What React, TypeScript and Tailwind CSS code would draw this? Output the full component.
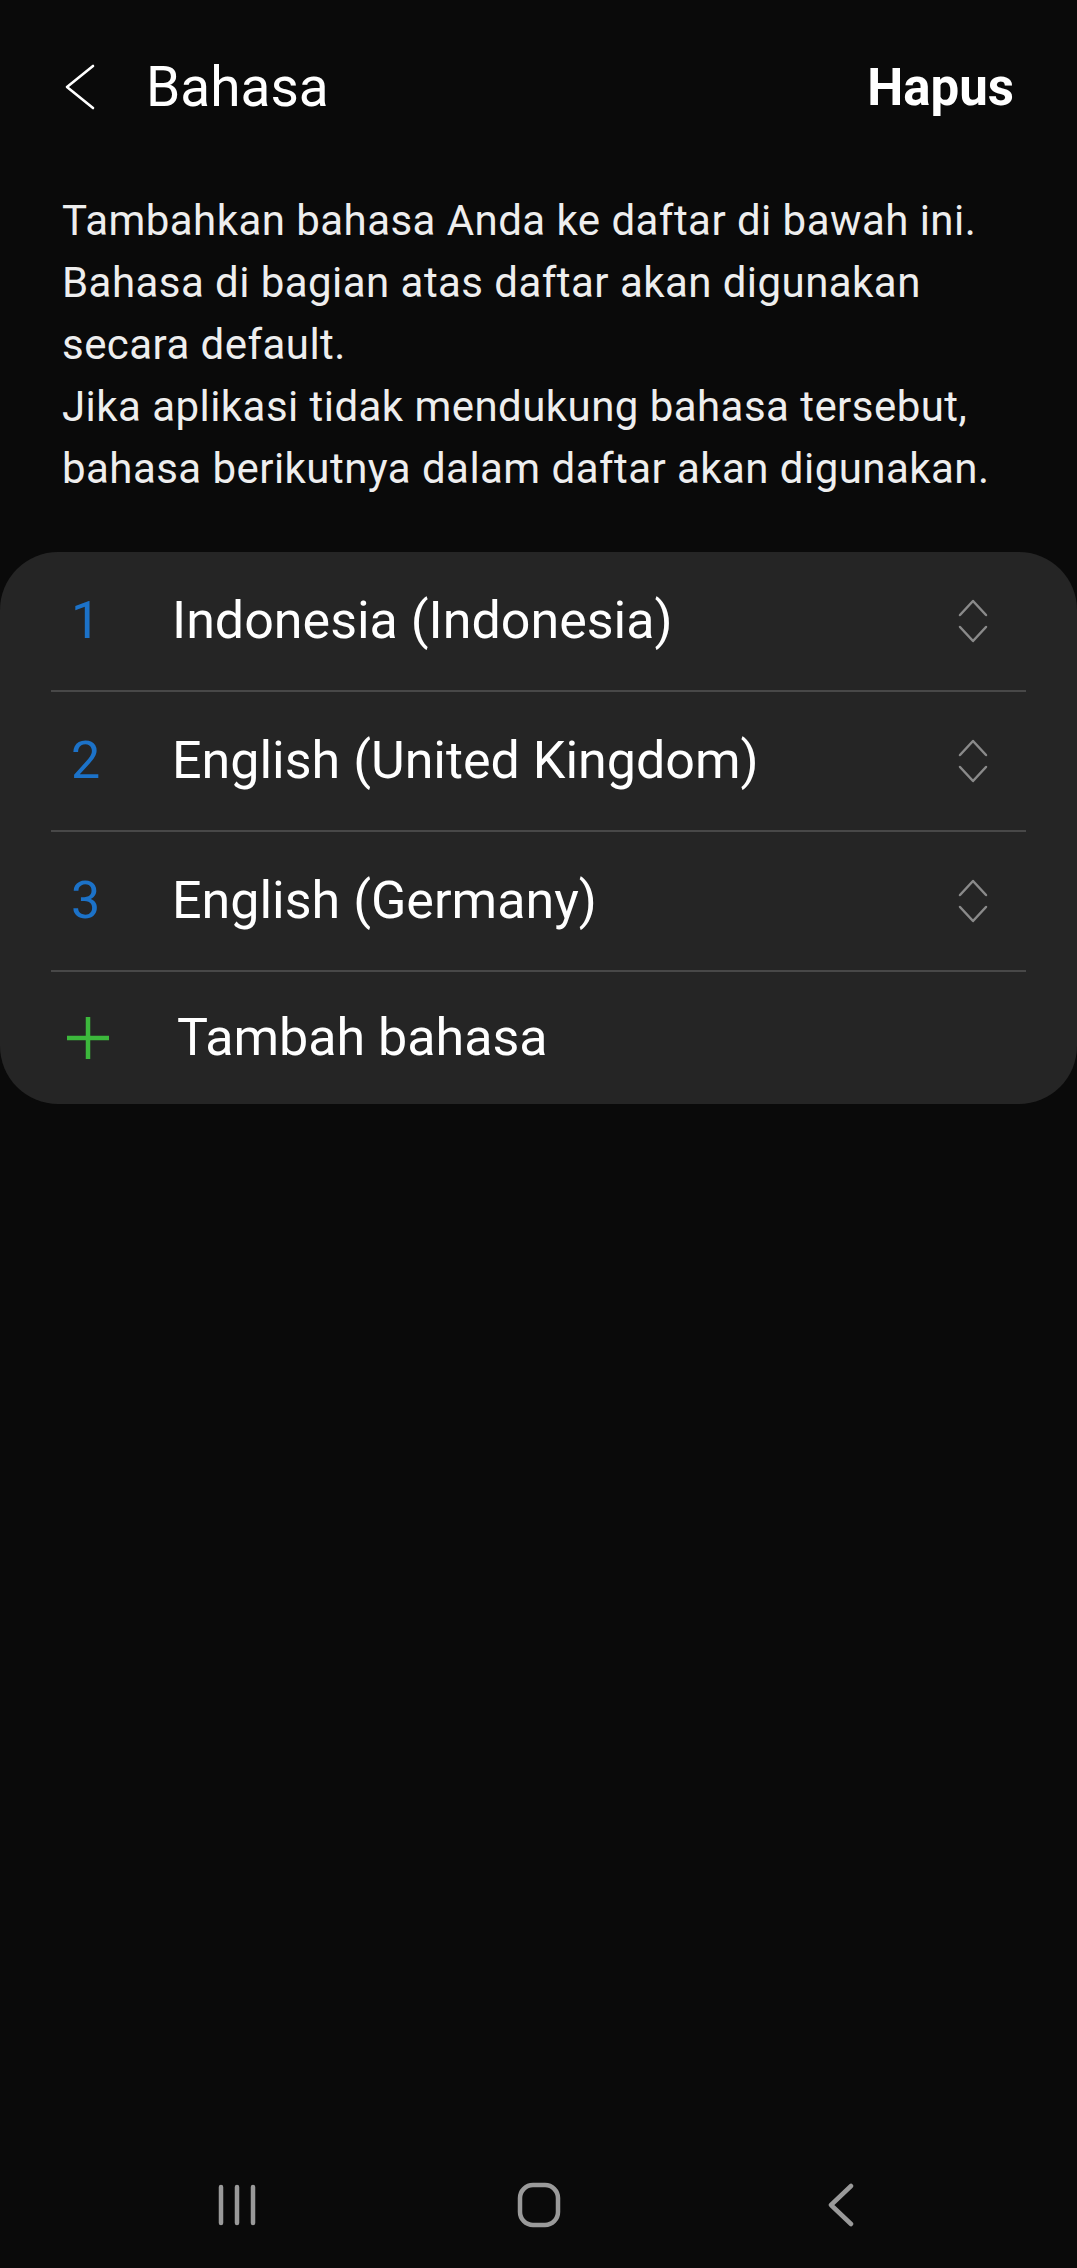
import React from "react";

const languages = [
  { no: 1, name: "Indonesia (Indonesia)" },
  { no: 2, name: "English (United Kingdom)" },
  { no: 3, name: "English (Germany)" },
];

const intro = [
  "Tambahkan bahasa Anda ke daftar di bawah ini.",
  "Bahasa di bagian atas daftar akan digunakan",
  "secara default.",
  "Jika aplikasi tidak mendukung bahasa tersebut,",
  "bahasa berikutnya dalam daftar akan digunakan.",
];

// up/down reorder handle
const ReorderHandle = () => (
  <svg width="30" height="46" viewBox="0 0 30 46" fill="none">
    <path d="M2 17 L15 3 L28 17" stroke="#8a8a8a" strokeWidth="2.5" strokeLinecap="round" strokeLinejoin="round" />
    <path d="M2 29 L15 43 L28 29" stroke="#8a8a8a" strokeWidth="2.5" strokeLinecap="round" strokeLinejoin="round" />
  </svg>
);

const App = () => {
  return (
    <div
      className="w-full h-[2268px] bg-[#0a0a0a] text-[#f5f5f5] flex flex-col"
      style={{ fontFamily: "Roboto, 'Noto Sans', sans-serif" }}
    >
      {/* top bar */}
      <div className="h-[174px] flex items-center pl-[64px] pr-[63px]">
        <svg width="32" height="46" viewBox="0 0 32 46" fill="none">
          <path d="M29 2 L3 23 L29 44" stroke="#ffffff" strokeWidth="2.6" strokeLinecap="round" strokeLinejoin="round" />
        </svg>
        <h1 className="ml-[50px] text-[55px] leading-none font-normal text-white">Bahasa</h1>
        <button className="ml-auto text-[51px] leading-none font-bold text-white">Hapus</button>
      </div>

      {/* description */}
      <div className="mt-[16px] px-[62px] text-[42px] tracking-[0.45px] leading-[62px] text-[#eeeeee]">
        {intro.map((line, i) => (
          <p key={i} className="whitespace-nowrap">
            {line}
          </p>
        ))}
      </div>

      {/* language list */}
      <div className="mt-[52px] w-full bg-[#252525] rounded-[58px] px-[51px]">
        {languages.map((lang) => (
          <div
            key={lang.no}
            className="h-[140px] flex items-center border-b-2 border-[#484848] pl-[20px] pr-[38px]"
          >
            <span className="w-[101px] text-[52px] leading-none text-[#1c72c8]">{lang.no}</span>
            <span className="text-[52px] leading-none text-white">{lang.name}</span>
            <div className="ml-auto">
              <ReorderHandle />
            </div>
          </div>
        ))}
        <div className="h-[132px] flex items-center pl-[16px]">
          <svg width="42" height="42" viewBox="0 0 42 42" fill="none">
            <path d="M21 0 V42 M0 21 H42" stroke="#3cb83c" strokeWidth="4.5" />
          </svg>
          <span className="ml-[68px] text-[52px] leading-none text-white">Tambah bahasa</span>
        </div>
      </div>

      <div className="flex-1" />

      {/* navigation bar */}
      <div className="h-[126px] flex items-center justify-center gap-[242px]">
        <div className="w-[60px] flex justify-center">
          <svg width="44" height="42" viewBox="0 0 44 42" fill="none">
            <path d="M6 3 V39 M22 3 V39 M38 3 V39" stroke="#9a9a9a" strokeWidth="4.5" strokeLinecap="round" />
          </svg>
        </div>
        <div className="w-[60px] flex justify-center">
          <svg width="46" height="46" viewBox="0 0 46 46" fill="none">
            <rect x="4" y="3" width="38" height="40" rx="13" stroke="#9a9a9a" strokeWidth="4.5" />
          </svg>
        </div>
        <div className="w-[60px] flex justify-center">
          <svg width="30" height="44" viewBox="0 0 30 44" fill="none">
            <path d="M25 3 L5 22 L25 41" stroke="#9a9a9a" strokeWidth="4.5" strokeLinecap="round" strokeLinejoin="round" />
          </svg>
        </div>
      </div>
    </div>
  );
};

export default App;
